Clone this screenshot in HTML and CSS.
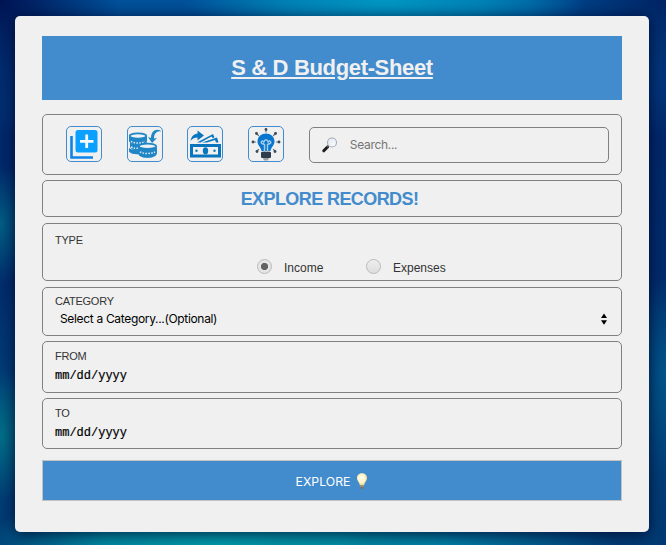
FILE: index.html
```html
<!DOCTYPE html>
<html lang="en">
<head>
<meta charset="utf-8">
<title>S &amp; D Budget-Sheet</title>
<link rel="stylesheet" href="styles.css">
</head>
<body>
<main class="card">
  <header class="banner"><h1>S &amp; D Budget-Sheet</h1></header>
  <nav class="panel toolbar">
    <a class="tool"><svg viewBox="0 0 34 34"><path d="M4.500 9v21.500h21.500" fill="none" stroke="#0c84ea" stroke-width="2.600"/><rect x="8.500" y="3" width="22" height="22.500" rx="2.500" fill="#09a0ff"/><path d="M19.700 7.500v13.500M13 14.300h13.500" stroke="#f8fcff" stroke-width="2.800"/></svg></a>
    <a class="tool"><svg viewBox="0 0 34 34"><g fill="#2086c5"><path d="M1 9.500v4C1 19 19 19 19 13.500v-4z"/><path d="M2 15v5c1 3 5 3.500 9 3l8-4v-4c-4 3-13 3-17 0z"/><path d="M1 21v3.500c2 3 8 3 10 2.500v-5c-4 1-8 1-10-1z"/><path d="M10 20.500v5c0 5 19 5 19 0v-5z"/><path d="M10.500 25v2.500c2 4.500 16 4.500 18 0V25z"/></g><ellipse cx="10" cy="9" rx="8.300" ry="2.600" fill="#edf2f4" stroke="#2086c5" stroke-width="1.800"/><ellipse cx="19.500" cy="19.300" rx="8.700" ry="2.600" fill="#edf2f4" stroke="#2086c5" stroke-width="1.800"/><path d="M3 14.500c4 2 10 2 14 0M3 20c3 1.500 5 1.500 7 1.200M12 25c4 2 11 2 15 0" fill="none" stroke="#d8eaf4" stroke-width="1.500" stroke-dasharray="1.500 1.300"/><path d="M33 4c-4-3-10-1-10 7l-3-1 4 6 5-5-3 .5c0-5 3-8 7-7z" fill="#2086c5"/></svg></a>
    <a class="tool"><svg viewBox="0 0 34 34"><path d="M2.500 13.800C3.500 9 6 6.700 9.500 6.700V3.500l6.500 5-6.500 5V10.500c-3 0-4.500 1-7 3.300z" fill="#0876be"/><path d="M9 15.500 25 7l1.500 3.500-2 .5-1-1.500-11 6zM14 15.500l15-5 1.500 5h-2.500l-1-2.500-8 2.500z" fill="#0876be"/><path fill="#0876be" fill-rule="evenodd" d="M2 17h31v13.500H2zM5 20v7.500h25V20z"/><ellipse cx="17.500" cy="23.800" rx="2.700" ry="3.600" fill="#0876be"/><circle cx="8.500" cy="23.800" r="1.200" fill="#0876be"/><circle cx="26.500" cy="23.800" r="1.200" fill="#0876be"/></svg></a>
    <a class="tool"><svg viewBox="0 0 34 34"><g stroke="#68727c" stroke-width="1.200" stroke-linecap="round"><path d="M17 2v3M7 6l2.500 2.500M27 6l-2.500 2.500M3.500 15h3M27.500 15h3M7.500 24.500l2-2M26.500 24.500l-2-2"/></g><g fill="#3d4a57"><circle cx="17" cy="2.500" r="1.400"/><circle cx="7.500" cy="6.500" r="1.400"/><circle cx="26.500" cy="6.500" r="1.400"/><circle cx="4" cy="15" r="1.400"/><circle cx="30" cy="15" r="1.400"/><circle cx="8" cy="24.500" r="1.400"/><circle cx="26" cy="24.500" r="1.400"/></g><path d="M8.500 14.500C8.500 3.700 25.500 3.700 25.500 14.500c0 4-3.500 5.500-4 9.500h-9c-.5-4-4-5.500-4-9.500z" fill="#0876d0"/><path d="M15.500 25v-7.500l-2.500-1c-2-1 .5-4 1.800-1.500 1.200-3 3.200-3 4.400 0 1.300-2.500 3.800.5 1.800 1.500l-2.500 1V25" fill="none" stroke="#a5cce6" stroke-width="1.500"/><rect x="12" y="24.700" width="10" height="6.300" rx="1.200" fill="#2e3d4d"/><path d="M14 31h6l-1 2.500h-4z" fill="#999fa5"/></svg></a>
    <div class="search">
      <svg class="lens" viewBox="0 0 16 16"><defs><linearGradient id="glass" x1="0" y1="0" x2="1" y2="1"><stop offset="0" stop-color="#dce6f2"/><stop offset="1" stop-color="#fff"/></linearGradient></defs><path d="M1.800 13.800 5.500 10" stroke="#1c1c20" stroke-width="3" stroke-linecap="round"/><path d="m5 10.200 2.200-2.200" stroke="#55585e" stroke-width="1.800"/><circle cx="10" cy="5.500" r="4.500" fill="url(#glass)" stroke="#a4a9b2" stroke-width="1.100"/></svg>
      <span>Search...</span>
    </div>
  </nav>
  <section class="panel heading"><h2>EXPLORE RECORDS!</h2></section>
  <section class="panel type">
    <span class="label">TYPE</span>
    <div class="radios">
      <span class="radio checked"></span><span class="choice income">Income</span>
      <span class="radio"></span><span class="choice">Expenses</span>
    </div>
  </section>
  <section class="panel category">
    <span class="label">CATEGORY</span>
    <div class="select"><span>Select a Category...(Optional)</span><svg class="arrows" viewBox="0 0 6 12"><path d="M0 5 3 .5 6 5zM0 7.200h6l-3 4.500z"/></svg></div>
  </section>
  <section class="panel date from"><span class="label">FROM</span><span class="value">mm/dd/yyyy</span></section>
  <section class="panel date to"><span class="label">TO</span><span class="value">mm/dd/yyyy</span></section>
  <button class="explore"><span>EXPLORE</span><svg class="bulb" viewBox="0 0 12 16"><defs><radialGradient id="glow" cx=".45" cy=".4" r=".6"><stop offset="0" stop-color="#fffef4"/><stop offset=".6" stop-color="#fff4c5"/><stop offset="1" stop-color="#e8d292"/></radialGradient></defs><path d="M1 5C1-1.300 11-1.300 11 5c0 3-2.500 4-2.800 7.500H3.800C3.500 9 1 8 1 5z" fill="url(#glow)"/><path d="M4 12h4v2.500L7 16H5l-1-1.500z" fill="#77756f"/><path d="M4 13h4" stroke="#c9c8bd" stroke-width=".7"/></svg></button>
</main>
</body>
</html>
```
FILE: styles.css
```css
* { box-sizing: border-box; }
html, body { height: 100%; }
body {
  margin: 0;
  padding: 16px 17px 13px 15px;
  overflow: hidden;
  font-family: "Liberation Sans", Arial, sans-serif;
  background:
    radial-gradient(ellipse 200px 60px at 385px 0, #0098c4 0, rgba(0, 145, 190, .75) 50%, transparent 100%),
    radial-gradient(ellipse 240px 60px at 220px 545px, #009caa 0, rgba(0, 155, 170, .8) 50%, transparent 100%),
    radial-gradient(ellipse 180px 50px at 440px 550px, #0085a8 0, transparent 100%),
    radial-gradient(ellipse 40px 60px at 0 225px, #005f85 0, transparent 100%),
    radial-gradient(ellipse 45px 65px at 0 435px, #007088 0, transparent 100%),
    radial-gradient(ellipse 50px 95px at 666px 375px, #00558a 0, transparent 100%),
    radial-gradient(ellipse 120px 120px at 0 0, #001352 0, transparent 100%),
    radial-gradient(ellipse 140px 100px at 666px 0, #002363 0, transparent 100%),
    linear-gradient(#00529b 0, #00286b 25%, #002b6c 50%, #00427a 75%, #003a73);
}
.card {
  height: 516px;
  padding: 20px 27px 31px;
  border-radius: 5px;
  background: #f0f0f0;
  box-shadow: 0 2px 15px rgba(0, 0, 35, .75);
}
h1, h2 { margin: 0; }
.banner {
  height: 64px;
  margin-bottom: 14px;
  background: #428bcd;
  color: #f0f0f0;
  text-align: center;
}
h1 { font-size: 22px; line-height: 63px; letter-spacing: -.34px; text-decoration: underline; }
.panel { border: 1px solid #808080; border-radius: 5px; }
.toolbar {
  display: flex;
  height: 61px;
  padding: 11px 12px 0 23px;
  margin-bottom: 5px;
}
.tool {
  width: 36px;
  height: 36px;
  margin-right: 24.600px;
  border: 1px solid #428bcd;
  border-radius: 5px;
}
.tool:nth-of-type(4) { margin-right: 25px; }
.tool svg { display: block; width: 34px; height: 34px; }
.search {
  display: flex;
  flex: 1;
  height: 36px;
  margin-top: 1px;
  padding-left: 12px;
  border: 1px solid #808080;
  border-radius: 5px;
  color: #757575;
  font: 12px/34px Inter, sans-serif;
  letter-spacing: -.3px;
}
.lens { width: 16px; height: 16px; margin: 9px 12px 0 0; }
.heading { height: 37px; margin-bottom: 6px; padding-right: 5px; text-align: center; }
h2 { color: #428bcd; font-size: 18px; line-height: 36px; letter-spacing: -.58px; }
.label { display: block; color: #333; font-size: 11px; line-height: 13px; letter-spacing: -.25px; }
.type { height: 58px; padding: 10px 12px 0; margin-bottom: 6px; }
.radios { display: flex; align-items: center; margin: 11px 0 0 202px; height: 18px; }
.radio {
  width: 15px;
  height: 15px;
  margin: -1px 12px 0 0;
  border: 1px solid #bababa;
  border-radius: 50%;
  background: linear-gradient(#eee, #dedede);
}
.radio.checked { background: radial-gradient(circle, #626262 0 3.200px, #e5e5e5 4px); }
.choice { padding-top: 2px; color: #333; font-size: 12px; line-height: 18px; }
.income { width: 82px; }
.category { height: 49px; padding: 7px 14px 0 12px; margin-bottom: 5px; }
.select {
  display: flex;
  justify-content: space-between;
  padding-left: 5px;
  font: 12px/17px Inter, sans-serif;
  letter-spacing: -.33px;
  margin-top: 2px;
}
.arrows { width: 6px; height: 12px; margin-top: 3px; }
.date { padding: 8px 12px 0; }
.from { height: 52px; margin-bottom: 5px; }
.to { height: 51px; margin-bottom: 11px; }
.value { display: block; margin-top: 6px; font: 12px/15px "Liberation Mono", monospace; -webkit-text-stroke: .2px #000; }
.explore {
  display: flex;
  align-items: center;
  justify-content: center;
  width: 100%;
  height: 41px;
  padding: 2px 0 0;
  border: 1px solid #c3c3c3;
  background: #428bcd;
  color: #fff;
  font: 12.300px/18px Inter, sans-serif;
}
.bulb { width: 12px; height: 16px; margin: -1px 0 0 6px; }
```
